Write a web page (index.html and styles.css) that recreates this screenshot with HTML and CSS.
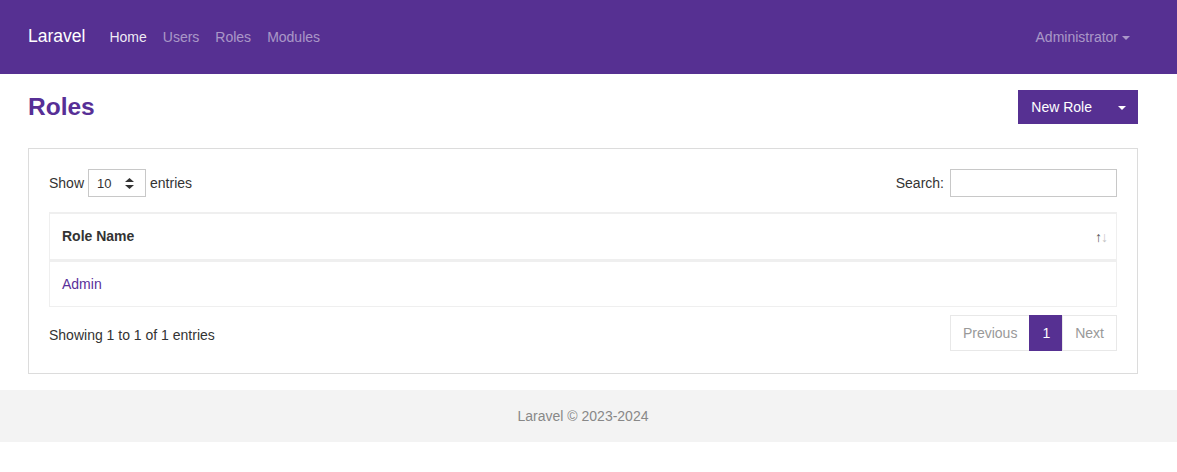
FILE: index.html
```html
<!DOCTYPE html>
<html lang="en">
<head>
<meta charset="utf-8">
<title>Roles</title>
<link rel="stylesheet" href="styles.css">
</head>
<body>
<nav class="navbar">
  <div class="navbar-inner">
    <a class="brand" href="#">Laravel</a>
    <ul class="nav">
      <li><a class="nav-link active" href="#">Home</a></li>
      <li><a class="nav-link" href="#">Users</a></li>
      <li><a class="nav-link" href="#">Roles</a></li>
      <li><a class="nav-link" href="#">Modules</a></li>
    </ul>
    <a class="nav-link user" href="#">Administrator<span class="caret"></span></a>
  </div>
</nav>

<main class="container">
  <div class="page-head">
    <h2 class="title">Roles</h2>
    <div class="btn-group">
      <button class="btn">New Role</button>
      <button class="btn btn-toggle"><span class="caret"></span></button>
    </div>
  </div>

  <div class="card">
    <div class="dt-top">
      <label class="length">Show
        <span class="select-wrap">
          <select class="select"><option>10</option></select>
          <svg class="select-arrows" width="9" height="11" viewBox="0 0 9 11"><path d="M4.5 0L9 4H0z M4.5 11L0 7h9z" fill="#333"/></svg>
        </span>
        entries</label>
      <label class="search">Search: <input class="search-input" type="text"></label>
    </div>

    <table class="table">
      <thead>
        <tr><th><div class="th-inner">Role Name<span class="sort"><span class="up">↑</span><span class="down">↓</span></span></div></th></tr>
      </thead>
      <tbody>
        <tr><td><a class="link" href="#">Admin</a></td></tr>
      </tbody>
    </table>

    <div class="dt-bottom">
      <div class="info">Showing 1 to 1 of 1 entries</div>
      <ul class="pagination">
        <li class="page disabled">Previous</li>
        <li class="page current">1</li>
        <li class="page disabled">Next</li>
      </ul>
    </div>
  </div>
</main>

<footer class="footer">
  <div class="footer-inner">Laravel © 2023-2024</div>
</footer>
</body>
</html>
```

FILE: styles.css
```css
* { box-sizing: border-box; }
html, body { margin: 0; padding: 0; }
body {
  font-family: "Liberation Sans", Arial, sans-serif;
  font-size: 14px;
  line-height: 1.5;
  color: #333;
  background: #fff;
}
a { text-decoration: none; }

.navbar {
  background: #563092;
  height: 74px;
}
.navbar-inner {
  width: 1110px;
  margin-left: 28px;
  height: 74px;
  display: flex;
  align-items: center;
}
.brand {
  font-size: 17.5px;
  color: #fff;
  margin-right: 16px;
  line-height: 1;
}
.nav {
  list-style: none;
  margin: 0;
  padding: 0;
  display: flex;
  flex: 1;
}
.nav-link {
  display: block;
  padding: 8px;
  color: rgba(255,255,255,0.5);
  font-size: 14px;
  line-height: 20px;
}
.nav-link.active { color: rgba(255,255,255,0.92); }
.user { display: flex; align-items: center; }
.caret {
  display: inline-block;
  width: 0;
  height: 0;
  border-top: 4px solid currentColor;
  border-left: 4px solid transparent;
  border-right: 4px solid transparent;
  margin-left: 4px;
  margin-top: 1px;
}

.container {
  width: 1110px;
  margin-left: 28px;
}
.page-head {
  display: flex;
  justify-content: space-between;
  align-items: center;
  margin-top: 16px;
  height: 34px;
}
.title {
  margin: 0;
  font-size: 24.5px;
  font-weight: bold;
  line-height: 1.2;
  color: #572f96;
}
.btn-group { display: flex; height: 34px; }
.btn {
  background: #563092;
  color: #fff;
  border: 0;
  font-family: inherit;
  font-size: 14px;
  line-height: 20px;
  padding: 7px 13px;
  margin: 0;
  cursor: pointer;
}
.btn-toggle {
  width: 33px;
  padding: 0;
  display: flex;
  align-items: center;
  justify-content: center;
}
.btn-toggle .caret { margin-left: 1px; }

.card {
  margin-top: 24px;
  border: 1px solid #dcdcdc;
  padding: 20px 20px 22px;
}
.dt-top {
  display: flex;
  justify-content: space-between;
  align-items: center;
  height: 28px;
}
.length, .search {
  display: flex;
  align-items: center;
  gap: 4px;
  font-weight: normal;
}
.search { gap: 6px; }
.select-wrap {
  position: relative;
  display: inline-block;
  width: 58px;
  height: 28px;
}
.select {
  appearance: none;
  -webkit-appearance: none;
  width: 58px;
  height: 28px;
  border: 1px solid #c8c8c8;
  border-radius: 0;
  background: #fff;
  font-family: inherit;
  font-size: 13px;
  color: #333;
  padding: 2px 8px;
  margin: 0;
}
.select-arrows {
  position: absolute;
  right: 12px;
  top: 9px;
  pointer-events: none;
}
.search-input {
  width: 167px;
  height: 28px;
  border: 1px solid #c8c8c8;
  border-radius: 0;
  margin: 0;
  padding: 2px 6px;
  font-family: inherit;
}

.table {
  width: 100%;
  margin-top: 15px;
  border-collapse: collapse;
  border-left: 1px solid #efefef;
  border-right: 1px solid #efefef;
}
.table th, .table td {
  text-align: left;
  padding: 12px 12px;
  line-height: 21px;
}
.table th {
  font-weight: bold;
  border-top: 2px solid #efefef;
  border-bottom: 3px solid #efefef;
  padding-right: 9px;
}
.th-inner {
  display: flex;
  justify-content: space-between;
  align-items: center;
}
.sort { font-size: 14px; font-weight: normal; letter-spacing: -1px; line-height: 1; }
.sort .up { color: #555; }
.sort .down { color: #c4c4c4; }
.table td { border-bottom: 1px solid #efefef; padding-bottom: 11px; }
.link { color: #5a2f9a; }

.dt-bottom {
  display: flex;
  justify-content: space-between;
  align-items: center;
  margin-top: 8px;
}
.info { padding-top: 4px; }
.pagination {
  list-style: none;
  margin: 0;
  padding: 0;
  display: flex;
}
.page {
  padding: 7px 12px;
  line-height: 20px;
  border: 1px solid #e8e8e8;
  margin-left: -1px;
  color: #999;
}
.page.current {
  background: #563092;
  border-color: #563092;
  color: #fff;
  padding: 7px 12px;
}

.footer {
  margin-top: 16px;
  background: #f3f3f3;
  height: 52px;
}
.footer-inner {
  width: 1110px;
  margin-left: 28px;
  text-align: center;
  line-height: 52px;
  color: #888;
}
```
